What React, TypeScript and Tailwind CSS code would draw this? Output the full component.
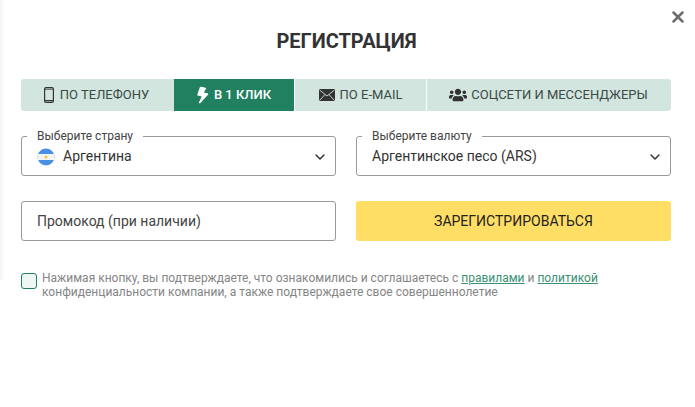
import { ChevronDown, X } from "lucide-react";
import { FaBolt, FaUsers } from "react-icons/fa";

function Field({ label, children }: { label: string; children: React.ReactNode }) {
  return (
    <fieldset className="h-[45px] rounded-[3px] border border-[#9a9a9a] pl-[15px] pr-3 min-w-0">
      <legend className="ml-[-10px] px-[10px] text-[12px] leading-[10px] h-[10px] text-[#444]">{label}</legend>
      <div className="flex items-center justify-between h-[30px] pt-[1px] text-[14px] text-[#333]">
        <div className="flex items-center min-w-0">{children}</div>
        <ChevronDown size={16} strokeWidth={2.2} className="text-[#333] mr-[-5px]" />
      </div>
    </fieldset>
  );
}

export default function App() {
  return (
    <div className="relative w-[695px] h-[407px] overflow-hidden bg-white pl-[21px] pr-6 font-['Roboto',sans-serif]">
      <div className="absolute left-0 top-0 h-[280px] w-[5px] bg-gradient-to-r from-[#f4f4f4] to-white" />
      <button className="absolute right-[8px] top-[8px] text-[#6e6e6e]">
        <X size={18} strokeWidth={3.4} />
      </button>
      <h1 className="pt-[30px] h-[79px] text-center text-[20px] leading-[22px] font-bold text-[#333] pl-[1px]">РЕГИСТРАЦИЯ</h1>
      <div className="flex h-8 rounded-[3px] overflow-hidden text-[13px] text-[#3a4a45] bg-[#d3e5df]">
        <div className="w-[153px] flex items-center justify-center gap-[6px] pr-[2px]">
          <svg width="10" height="16" viewBox="0 0 10 16" className="shrink-0">
            <rect x="0.6" y="0.6" width="8.8" height="14.8" rx="1.5" fill="none" stroke="#333" strokeWidth="1.2" />
            <rect x="0.6" y="13" width="8.8" height="1.2" fill="#333" />
            <rect x="0.6" y="1.8" width="8.8" height="0.8" fill="#333" />
          </svg>
          <span>ПО ТЕЛЕФОНУ</span>
        </div>
        <div className="w-[120px] flex items-center justify-center gap-[3px] pr-[3px] bg-[#218060] text-white font-medium">
          <FaBolt size={17} className="rotate-[12deg]" />
          <span>В 1 КЛИК</span>
        </div>
        <div className="w-[132px] flex items-center justify-center gap-[5px] border-l border-white">
          <svg width="16" height="12" viewBox="0 0 16 12" className="shrink-0">
            <rect width="16" height="12" rx="1" fill="#333" />
            <path d="M0.5 1 8 7l7.5-6M0.5 11.5 6 5.5M15.5 11.5 10 5.5" fill="none" stroke="#d3e5df" strokeWidth="0.9" />
          </svg>
          <span>ПО E-MAIL</span>
        </div>
        <div className="flex-1 flex items-center justify-center gap-[4px] pr-[1px] border-l border-white">
          <FaUsers size={18} className="text-[#333]" />
          <span>СОЦСЕТИ И МЕССЕНДЖЕРЫ</span>
        </div>
      </div>
      <div className="grid grid-cols-2 gap-5 mt-[20px]">
        <Field label="Выберите страну">
          <svg width="18" height="18" viewBox="0 0 18 18" className="shrink-0 mr-[8px]">
            <defs>
              <clipPath id="c"><circle cx="9" cy="9" r="8.5" /></clipPath>
            </defs>
            <g clipPath="url(#c)">
              <rect width="18" height="18" fill="#4a90e2" />
              <rect y="6" width="18" height="6" fill="#f3f3f3" />
              <circle cx="9" cy="9" r="1.6" fill="#f5c842" />
            </g>
          </svg>
          <span>Аргентина</span>
        </Field>
        <Field label="Выберите валюту">
          <span>Аргентинское песо (ARS)</span>
        </Field>
      </div>
      <div className="grid grid-cols-2 gap-5 mt-[25px]">
        <div className="h-10 rounded-[3px] border border-[#9a9a9a] pl-[15px] flex items-center text-[14px] text-[#444]">Промокод (при наличии)</div>
        <button className="h-10 rounded-[3px] bg-[#ffde66] text-[14px] text-[#222]">ЗАРЕГИСТРИРОВАТЬСЯ</button>
      </div>
      <div className="flex mt-[32px]">
        <div className="w-4 h-4 mr-[5px] shrink-0 rounded-[3px] border border-[#218060] bg-[#eef7f4]" />
        <p className="mt-[-2px] text-[12px] leading-[14px] text-[#858585]">
          Нажимая кнопку, вы подтверждаете, что ознакомились и соглашаетесь с{" "}
          <a className="text-[#3b8f74] underline">правилами</a> и{" "}
          <a className="text-[#3b8f74] underline">политикой</a>
          <br />
          конфиденциальности компании, а также подтверждаете свое совершеннолетие
        </p>
      </div>
    </div>
  );
}
